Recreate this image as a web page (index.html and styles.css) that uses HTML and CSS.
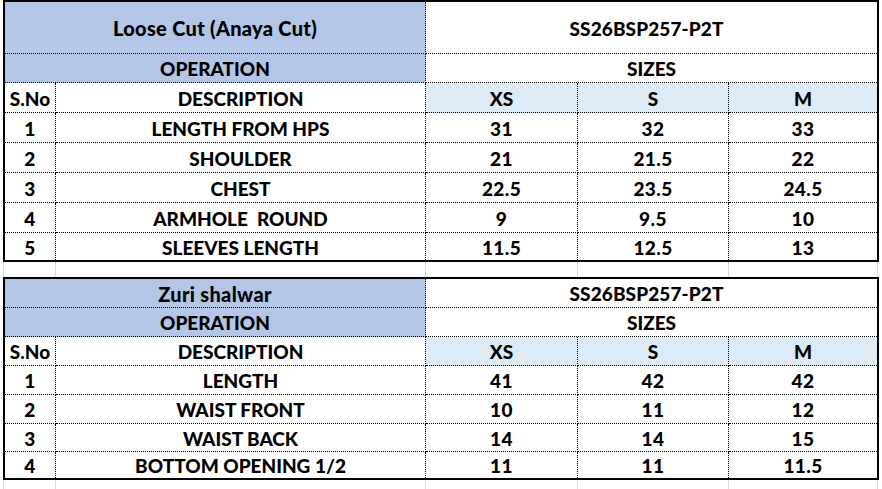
FILE: index.html
```html
<!DOCTYPE html>
<html lang="en">
<head>
<meta charset="utf-8">
<title>Size Specs</title>
<link rel="stylesheet" href="styles.css">
</head>
<body>
<div class="sheet">
  <div class="spec spec-top">
    <div class="c blue span2 mixed">Loose Cut (Anaya Cut)</div>
    <div class="c span3 last code">SS26BSP257-P2T</div>
    <div class="c blue span2">OPERATION</div>
    <div class="c span3 last">SIZES</div>
    <div class="c">S.No</div>
    <div class="c">DESCRIPTION</div>
    <div class="c size">XS</div>
    <div class="c size">S</div>
    <div class="c size last">M</div>

    <div class="c num">1</div><div class="c">LENGTH FROM HPS</div><div class="c num">31</div><div class="c num">32</div><div class="c last num">33</div>
    <div class="c num">2</div><div class="c">SHOULDER</div><div class="c num">21</div><div class="c num">21.5</div><div class="c last num">22</div>
    <div class="c num">3</div><div class="c">CHEST</div><div class="c num">22.5</div><div class="c num">23.5</div><div class="c last num">24.5</div>
    <div class="c num">4</div><div class="c">ARMHOLE&nbsp; ROUND</div><div class="c num">9</div><div class="c num">9.5</div><div class="c last num">10</div>
    <div class="c end num">5</div><div class="c end">SLEEVES LENGTH</div><div class="c end num">11.5</div><div class="c end num">12.5</div><div class="c end last num">13</div>
  </div>

  <div class="gap"><span></span><span></span><span></span><span></span><span></span><span></span></div>

  <div class="spec spec-bottom">
    <div class="c blue span2 mixed">Zuri shalwar</div>
    <div class="c span3 last code">SS26BSP257-P2T</div>
    <div class="c blue span2">OPERATION</div>
    <div class="c span3 last">SIZES</div>
    <div class="c">S.No</div>
    <div class="c">DESCRIPTION</div>
    <div class="c size">XS</div>
    <div class="c size">S</div>
    <div class="c size last">M</div>

    <div class="c num">1</div><div class="c">LENGTH</div><div class="c num">41</div><div class="c num">42</div><div class="c last num">42</div>
    <div class="c num">2</div><div class="c">WAIST FRONT</div><div class="c num">10</div><div class="c num">11</div><div class="c last num">12</div>
    <div class="c num">3</div><div class="c">WAIST BACK</div><div class="c num">14</div><div class="c num">14</div><div class="c last num">15</div>
    <div class="c end num">4</div><div class="c end">BOTTOM OPENING 1/2</div><div class="c end num">11</div><div class="c end num">11</div><div class="c end last num">11.5</div>
  </div>

  <div class="gap gap-end"><span></span><span></span><span></span><span></span><span></span><span></span></div>
</div>
</body>
</html>
```

FILE: styles.css
```css
* {
  box-sizing: border-box;
}

html, body {
  margin: 0;
  padding: 0;
  background: #ffffff;
}

body {
  font-family: "Lato", "Open Sans", sans-serif;
  font-weight: 900;
  font-size: 19px;
  color: #000000;
  width: 882px;
  height: 489px;
  overflow: hidden;
}

.sheet {
  display: flex;
  flex-direction: column;
}

.spec {
  margin-left: 3px;
  width: 876px;
  border: 2px solid #000000;
  display: grid;
  grid-template-columns: 51px 370px 152px 151px 148px;
}

.spec-top {
  grid-template-rows: 52px 29px 30px 30px 30px 30px 30px 27px;
}

.spec-bottom {
  grid-template-rows: 29px 29px 29px 29px 29px 28px 26px;
}

.c {
  display: flex;
  align-items: center;
  justify-content: center;
  white-space: nowrap;
  border-right: 1px dotted #000000;
  border-bottom: 1px dotted #000000;
  padding-top: 1px;
  line-height: 1;
}

.c.mixed {
  font-size: 20px;
  letter-spacing: 0.3px;
}

.c.num {
  letter-spacing: 0.4px;
}

.c.code {
  letter-spacing: 0.1px;
  padding-right: 10px;
}

.c.last {
  border-right: none;
}

.c.end {
  border-bottom: none;
}

.span2 {
  grid-column: span 2;
}

.span3 {
  grid-column: span 3;
}

.blue {
  background: #b4c6e7;
}

.size {
  background: #ddebf7;
}

.gap {
  margin-left: 3px;
  width: 879px;
  height: 15px;
  display: flex;
}

.gap span {
  border-left: 1px solid #d9d9d9;
  height: 100%;
}

.gap span:nth-child(1) { width: 52px; }
.gap span:nth-child(2) { width: 370px; }
.gap span:nth-child(3) { width: 152px; }
.gap span:nth-child(4) { width: 151px; }
.gap span:nth-child(5) { width: 149px; }
.gap span:nth-child(6) { width: 5px; }

.gap-end {
  height: 10px;
}
```
